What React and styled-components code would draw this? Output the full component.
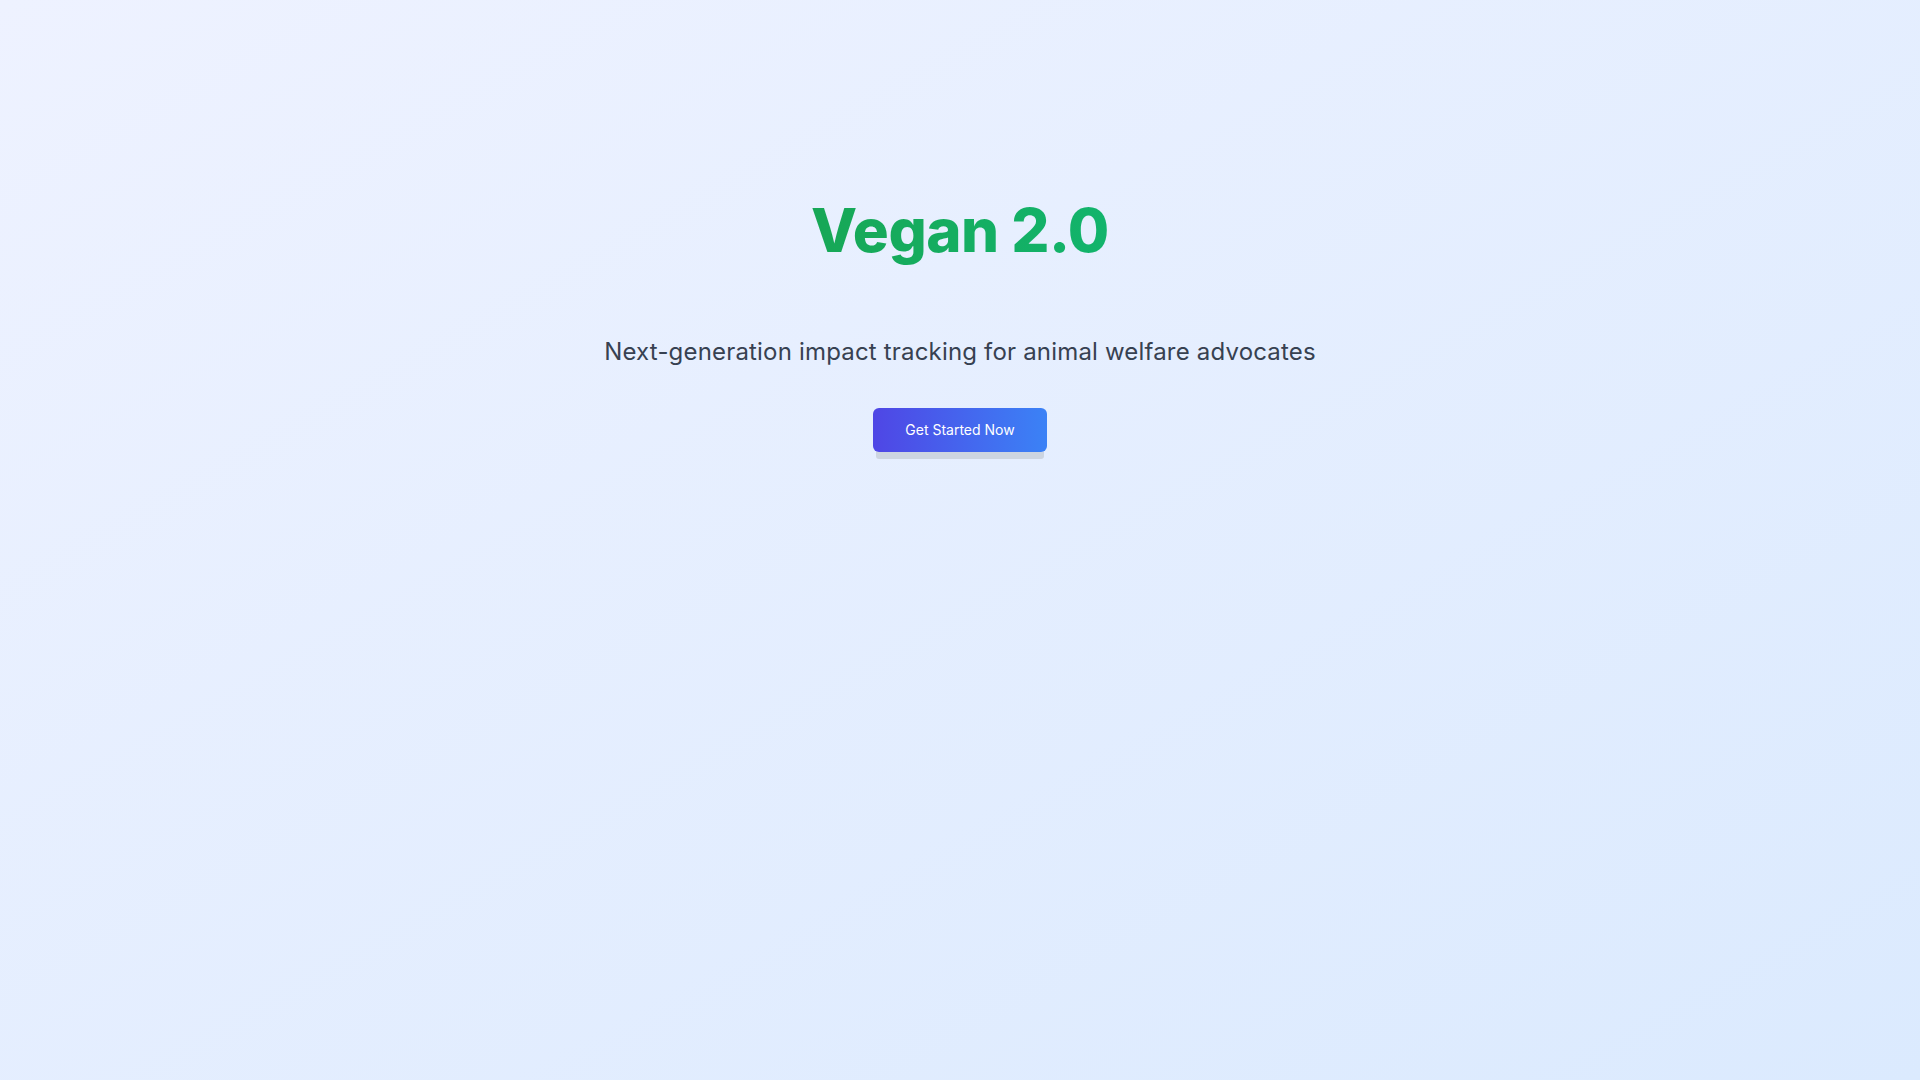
import React from 'react';
import styled, { createGlobalStyle } from 'styled-components';

const GlobalStyle = createGlobalStyle`
  * {
    box-sizing: border-box;
  }
  html,
  body {
    margin: 0;
    padding: 0;
    font-family: Inter, "Noto Sans", sans-serif;
  }
`;

const PageStyle = styled.div`
  min-height: 100vh;
  background: linear-gradient(to bottom right, #eef2ff, #dbeafe);
  display: flex;
  flex-direction: column;
  align-items: center;
  padding-top: 200px;
  text-align: center;
`;

const Title = styled.h1`
  margin: 0 0 62px;
  padding-bottom: 14px;
  font-size: 60px;
  line-height: 1;
  font-weight: 800;
  letter-spacing: -0.5px;
  background: linear-gradient(to right, #17a756, #12b46c);
  -webkit-background-clip: text;
  background-clip: text;
  color: transparent;
`;

const Subtitle = styled.p`
  margin: 0 0 40px;
  font-size: 24px;
  line-height: 32px;
  letter-spacing: 0.18px;
  color: #374151;
`;

const Button = styled.button`
  border: none;
  cursor: pointer;
  font-family: inherit;
  font-size: 14px;
  line-height: 20px;
  font-weight: 400;
  color: #ffffff;
  padding: 12px 32px;
  border-radius: 6px;
  background: linear-gradient(to right, #4f46e5, #3b82f6);
  box-shadow: 0 10px 0 -3px #cdd5e1;
`;

export default function App() {
  return (
    <>
      <GlobalStyle />
      <PageStyle>
        <Title>Vegan 2.0</Title>
        <Subtitle>
          Next-generation impact tracking for animal welfare advocates
        </Subtitle>
        <Button>Get Started Now</Button>
      </PageStyle>
    </>
  );
}
